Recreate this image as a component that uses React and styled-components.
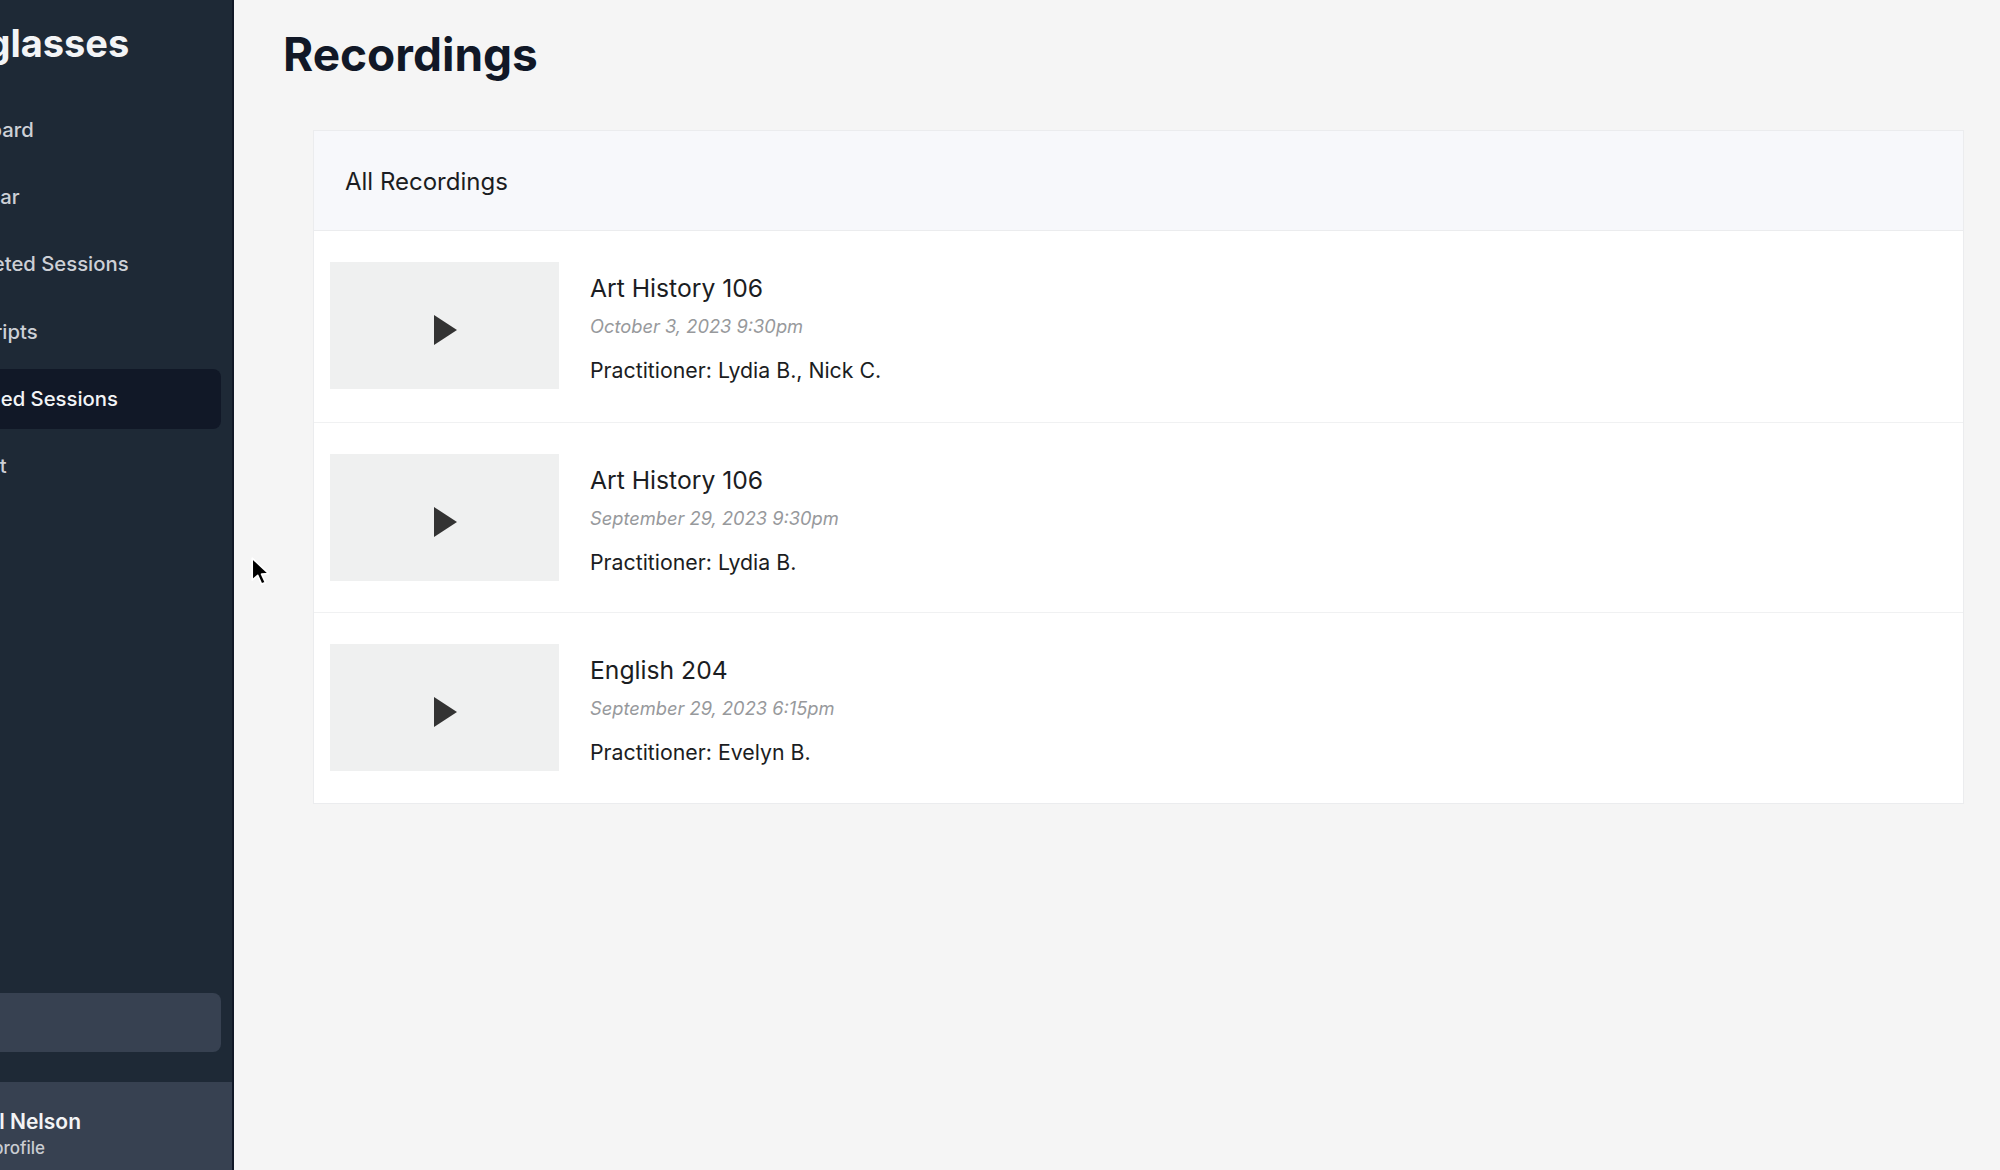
import React from 'react'
import styled, { createGlobalStyle } from 'styled-components'

const GlobalStyle = createGlobalStyle`
    html, body {
        margin: 0;
        padding: 0;
        height: 100%;
        overflow: hidden;
        background: #f5f5f5;
        font-family: Inter, "Liberation Sans", sans-serif;
    }
`

const Page = styled.div`
    position: relative;
    display: flex;
    width: 2000px;
    height: 1170px;
    overflow: hidden;
`

const Sidebar = styled.aside`
    width: 232px;
    flex-shrink: 0;
    display: flex;
    flex-direction: column;
    background: #1e2936;
    border-right: 2px solid #111827;
    overflow: hidden;
`

const Logo = styled.div`
    margin: 21px 0 0 -125px;
    height: 44px;
    font-size: 38px;
    line-height: 44px;
    font-weight: 700;
    color: #f3f4f6;
    white-space: nowrap;
`

const Nav = styled.nav`
    display: flex;
    flex-direction: column;
    gap: 7.2px;
    margin: 35px 11px 0 0;
    flex: 1;
`

const NavItem = styled.a`
    display: block;
    height: 60px;
    line-height: 60px;
    padding-left: ${p => p.$offset}px;
    margin-left: -100px;
    border-radius: 8px;
    font-size: 20.3px;
    font-weight: 500;
    white-space: nowrap;
    color: ${p => (p.$active ? '#f3f4f6' : '#cdd0d6')};
    background: ${p => (p.$active ? '#111827' : 'transparent')};
`

const SearchBar = styled.div`
    height: 59px;
    margin: 0 11px 30px -20px;
    border-radius: 8px;
    background: #374151;
`

const Profile = styled.div`
    height: 88px;
    box-sizing: border-box;
    padding-top: 27px;
    margin-left: -100px;
    background: #374151;
    white-space: nowrap;
`

const ProfileName = styled.div`
    font-size: 21px;
    line-height: 26px;
    font-weight: 600;
    color: #f3f4f6;
    text-align: right;
    width: 181px;
`

const ProfileLink = styled.div`
    font-size: 17px;
    line-height: 25px;
    margin-top: 1px;
    font-weight: 500;
    color: #c9ccd2;
    text-align: right;
    width: 145px;
`

const Main = styled.main`
    flex: 1;
    min-width: 0;
    padding: 26px 36px 0 49px;
`

const Title = styled.h1`
    margin: 0 0 48px;
    font-size: 46px;
    line-height: 56px;
    font-weight: 700;
    color: #111827;
`

const Panel = styled.section`
    margin-left: 30px;
    background: #fff;
    border: 1px solid #ebecee;
`

const PanelHeader = styled.header`
    height: 100px;
    box-sizing: border-box;
    padding: 2px 31px 0;
    display: flex;
    align-items: center;
    background: #f7f8fb;
    border-bottom: 1px solid #ebecee;
    font-size: 24px;
    color: #1b1d22;
`

const Row = styled.article`
    display: flex;
    gap: 31px;
    height: 190.6px;
    box-sizing: border-box;
    padding: 31px 16px;
    border-top: ${p => (p.$first ? 'none' : '1px solid #f0f1f2')};
`

const Thumb = styled.div`
    width: 229px;
    height: 127px;
    flex-shrink: 0;
    display: flex;
    align-items: center;
    justify-content: center;
    background: #eff0f0;
`

const PlayIcon = styled.svg`
    width: 23px;
    height: 30px;
    margin: 9px 0 0 2px;
    fill: #333;
`

const Info = styled.div`
    display: flex;
    flex-direction: column;
`

const RowTitle = styled.div`
    font-size: 24.7px;
    line-height: 30px;
    margin-top: 11px;
    color: #1b1d22;
`

const RowDate = styled.div`
    font-size: 18.3px;
    line-height: 24px;
    margin-top: 11px;
    font-style: italic;
    color: #97999c;
`

const RowPeople = styled.div`
    font-size: 21.3px;
    line-height: 28px;
    margin-top: 18px;
    color: #1b1d22;
`

const Cursor = styled.svg`
    position: absolute;
    left: 250px;
    top: 557px;
    width: 22px;
    height: 31px;
`

const navItems = [
    { label: 'Dashboard', offset: 28 },
    { label: 'Calendar', offset: 32 },
    { label: 'Completed Sessions', offset: 30 },
    { label: 'Transcripts', offset: 28 },
    { label: 'Recorded Sessions', offset: 32, active: true },
    { label: 'Support', offset: 29 },
]

const recordings = [
    { title: 'Art History 106', date: 'October 3, 2023 9:30pm', people: 'Lydia B., Nick C.' },
    { title: 'Art History 106', date: 'September 29, 2023 9:30pm', people: 'Lydia B.' },
    { title: 'English 204', date: 'September 29, 2023 6:15pm', people: 'Evelyn B.' },
]

export default function App() {
    return (
        <Page>
            <GlobalStyle />
            <Sidebar>
                <Logo>Smartglasses</Logo>
                <Nav>
                    {navItems.map((item) => (
                        <NavItem key={item.label} $active={item.active} $offset={item.offset}>
                            {item.label}
                        </NavItem>
                    ))}
                </Nav>
                <SearchBar />
                <Profile>
                    <ProfileName>Paul Nelson</ProfileName>
                    <ProfileLink>View profile</ProfileLink>
                </Profile>
            </Sidebar>
            <Main>
                <Title>Recordings</Title>
                <Panel>
                    <PanelHeader>All Recordings</PanelHeader>
                    {recordings.map((rec, i) => (
                        <Row key={i} $first={i === 0}>
                            <Thumb>
                                <PlayIcon viewBox="0 0 23 30">
                                    <polygon points="0,0 23,15 0,30" />
                                </PlayIcon>
                            </Thumb>
                            <Info>
                                <RowTitle>{rec.title}</RowTitle>
                                <RowDate>{rec.date}</RowDate>
                                <RowPeople>Practitioner: {rec.people}</RowPeople>
                            </Info>
                        </Row>
                    ))}
                </Panel>
            </Main>
            <Cursor viewBox="0 0 20 28">
                <path d="M2 1 L2 21 L7 16.5 L10.5 24.5 L14 23 L10.5 15.5 L17 15 Z" fill="#000" stroke="#fff" strokeWidth="1.5" strokeLinejoin="round" />
            </Cursor>
        </Page>
    )
}
